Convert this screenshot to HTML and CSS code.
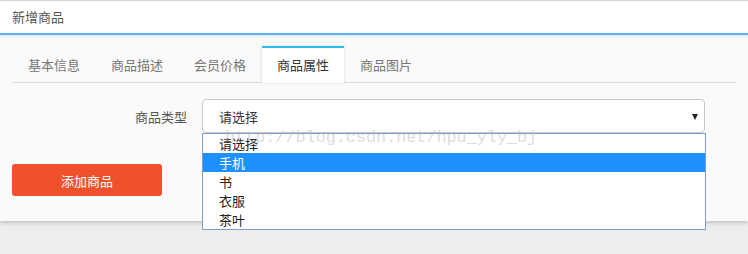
FILE: index.html
```html
<!DOCTYPE html>
<html lang="zh">
<head>
<meta charset="utf-8">
<title>新增商品</title>
<link rel="stylesheet" href="styles.css">
</head>
<body>
<div class="header">新增商品</div>
<div class="panel">
  <ul class="tabs">
    <li class="tab">基本信息</li>
    <li class="tab">商品描述</li>
    <li class="tab">会员价格</li>
    <li class="tab active">商品属性</li>
    <li class="tab">商品图片</li>
  </ul>
  <div class="form-row">
    <label class="label">商品类型</label>
    <div class="select-wrap">
      <div class="select"><span>请选择</span><i class="caret"></i></div>
      <ul class="options">
        <li class="option">请选择</li>
        <li class="option selected">手机</li>
        <li class="option">书</li>
        <li class="option">衣服</li>
        <li class="option">茶叶</li>
      </ul>
    </div>
  </div>
  <button class="btn">添加商品</button>
</div>
<div class="watermark">http://blog.csdn.net/hpu_yly_bj</div>
</body>
</html>
```
FILE: styles.css
```css
html, body {
  margin: 0;
  padding: 0;
}
body {
  background: #ededed;
  font-family: "Noto Sans CJK SC", "Noto Sans", sans-serif;
  font-size: 13px;
  width: 748px;
  height: 254px;
  overflow: hidden;
  position: relative;
}
.header {
  background: #fff;
  border-top: 1px solid #d4d4d4;
  border-bottom: 2px solid #5cb0fa;
  height: 32px;
  line-height: 32px;
  padding-left: 12px;
  color: #555;
  position: relative;
  z-index: 2;
  box-shadow: 0 1px 3px rgba(0,0,0,0.12);
}
.panel {
  background: #fafafa;
  height: 175px;
  padding: 11px 12px 0;
  box-shadow: 0 2px 4px rgba(0,0,0,0.18);
  position: relative;
  z-index: 1;
}
.tabs {
  list-style: none;
  margin: 0;
  padding: 0;
  display: flex;
  gap: 1px;
  border-bottom: 1px solid #dedede;
  height: 36px;
}
.tab {
  height: 34px;
  line-height: 34px;
  border-top: 2px solid transparent;
  padding: 0 15px;
  color: #777;
  white-space: nowrap;
}
.tab:first-child {
  padding-left: 16px;
}
.tab.active {
  border-top-color: #2bbbe6;
  background: #fff;
  color: #333;
  height: 35px;
  box-shadow: 1px 0 2px rgba(0,0,0,0.08), -1px 0 2px rgba(0,0,0,0.08);
}
.form-row {
  display: flex;
  align-items: center;
  margin-top: 16px;
}
.label {
  width: 175px;
  text-align: right;
  color: #555;
  padding-right: 15px;
}
.select-wrap {
  position: relative;
  width: 503px;
}
.select {
  box-sizing: border-box;
  height: 34px;
  border: 1px solid #c8c8c8;
  border-radius: 4px;
  background: #fff;
  display: flex;
  align-items: center;
  justify-content: space-between;
  padding: 0 6px 0 16px;
  color: #333;
}
.caret {
  width: 0;
  height: 0;
  border-left: 3.5px solid transparent;
  border-right: 3.5px solid transparent;
  border-top: 6px solid #222;
  margin-top: 1px;
}
.options {
  position: absolute;
  top: 34px;
  left: 0;
  width: 504px;
  box-sizing: border-box;
  margin: 0;
  padding: 0;
  list-style: none;
  background: #fff;
  border: 1px solid #7f9bd6;
  z-index: 5;
}
.option {
  height: 19px;
  line-height: 19px;
  padding-left: 16px;
  color: #222;
}
.option.selected {
  background: #1e90ff;
  color: #fff;
}
.btn {
  display: block;
  margin-top: 31px;
  width: 150px;
  height: 32px;
  border: none;
  border-radius: 3px;
  background: #ee512c;
  color: #fff;
  font-family: inherit;
  font-size: 13px;
  padding: 0;
}
.watermark {
  position: absolute;
  left: 225px;
  top: 130px;
  font-family: "Liberation Mono", monospace;
  font-size: 16.8px;
  line-height: 1;
  color: rgba(175,175,175,0.45);
  pointer-events: none;
  z-index: 10;
  white-space: nowrap;
}
```
